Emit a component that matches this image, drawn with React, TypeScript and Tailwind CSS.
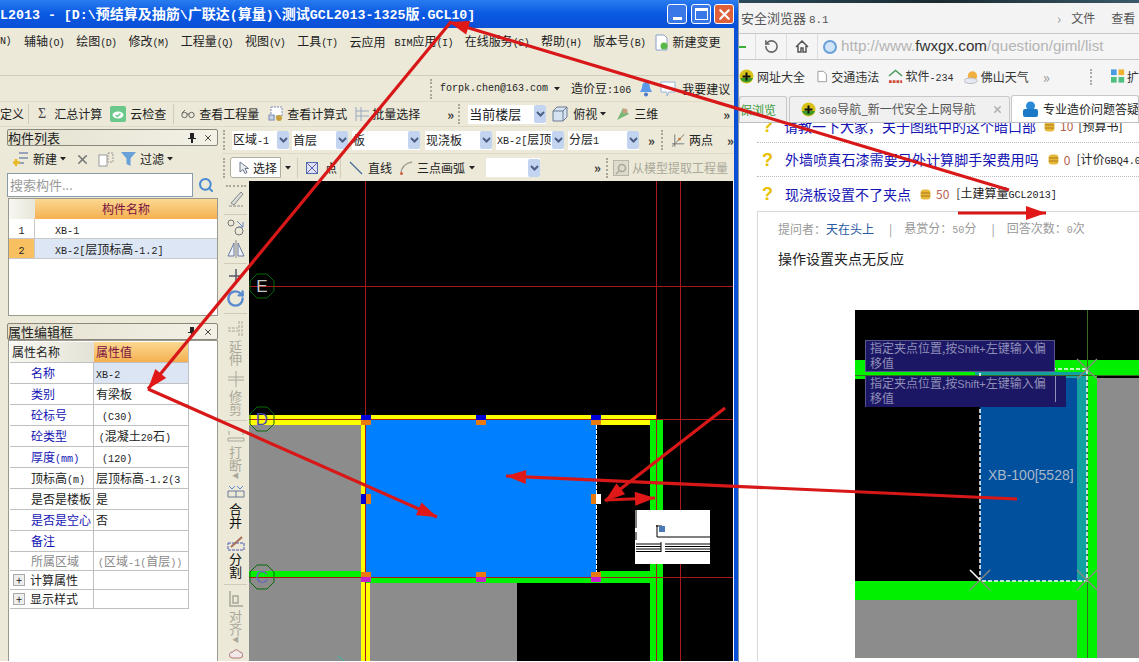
import React from 'react';
import { RotateCw, Search, X } from 'lucide-react';

type Kids = { children?: React.ReactNode; className?: string };

// ascii in the screenshot is a narrow bitmap face, so shrink it against the CJK text
const Lat = ({ children }: Kids) => (
  <span className="font-['Liberation_Mono',monospace] text-[0.84em]">{children}</span>
);

const Dd = ({ className = '' }: Kids) => (
  <span className={`w-3 h-[18px] bg-[#c3d4f0] rounded-[2px] flex items-center justify-center shrink-0 ${className}`}>
    <svg width="9" height="6"><path d="M1 1l3.5 3.5L8 1" stroke="#4a5f85" strokeWidth="2" fill="none" /></svg>
  </span>
);

const Caret = ({ className = '' }: Kids) => (
  <svg width="6" height="4" className={`shrink-0 ${className}`}><path d="M0 0h6L3 3.5z" fill="#222" /></svg>
);

const More = ({ className = '' }: Kids) => (
  <span className={`text-[13px] font-bold leading-none text-[#333] ${className}`}>»</span>
);

const Grip = ({ className = '' }: Kids) => (
  <span className={`h-5 border-l-2 border-dotted border-[#a8a698] shrink-0 ${className}`} />
);

const Sep = ({ className = '' }: Kids) => <span className={`w-px h-5 bg-[#cfccb8] shrink-0 ${className}`} />;

const Field = ({ children, className = '' }: Kids) => (
  <span className={`h-[19px] bg-white flex items-center justify-between shrink-0 ${className}`}>
    <span className="pl-[1px] whitespace-nowrap overflow-hidden">{children}</span>
    <Dd />
  </span>
);

const Key = ({ k }: { k: string }) => (
  <span className="font-['Liberation_Mono',monospace] text-[10px] tracking-[-0.6px]">({k})</span>
);

const MenuItem = ({ label, k }: { label: string; k: string }) => (
  <span className="whitespace-nowrap">
    {label}
    <Key k={k} />
  </span>
);

const PlusCoin = ({ className = '' }: Kids) => (
  <svg width="15" height="15" viewBox="0 0 15 15" className={`shrink-0 ${className}`}>
    <circle cx="7.5" cy="7.5" r="7" fill="#d8c21a" />
    <path d="M1 9a7 7 0 0 0 13 0z" fill="#3a9a2a" />
    <path d="M7.5 3.5v8M3.5 7.5h8" stroke="#111" strokeWidth="2" />
  </svg>
);

const Coin = () => (
  <svg width="11" height="11" viewBox="0 0 11 11" className="shrink-0">
    <rect x="0.5" y="0.5" width="10" height="10" rx="3.5" fill="#e8b83a" />
    <path d="M1 4h9M1 7h9" stroke="#a87a18" />
  </svg>
);

const Qmark = ({ className = '' }: Kids) => (
  <span className={`w-[15px] text-[18px] leading-none font-bold text-[#e8c000] font-['Liberation_Sans',sans-serif] shrink-0 ${className}`}>?</span>
);

function TitleBar() {
  const A = ({ children }: Kids) => (
    <span className="font-['Liberation_Mono',monospace] text-[13.3px]">{children}</span>
  );
  const btn = 'w-5 h-5 rounded-[3px] border border-white flex items-center justify-center';
  return (
    <div className="h-[28px] bg-gradient-to-b from-[#2a7cf0] via-[#0a58e2] to-[#0a50d6] flex items-center text-white font-bold text-[14px] whitespace-nowrap overflow-hidden">
      <span className="w-[664px] shrink-0">
        <A>L2013 - [D:\</A>预结算及抽筋<A>\</A>广联达<A>(</A>算量<A>)\</A>测试<A>GCL2013-1325</A>版<A>.GCL10]</A>
      </span>
      <span className={`${btn} ml-[3px] bg-[#3a78e8] items-end pb-[3px]`}><span className="w-[9px] h-[3px] bg-white" /></span>
      <span className={`${btn} ml-1 bg-[#3a78e8]`}><span className="w-[13px] h-[12px] border border-white border-t-[3px]" /></span>
      <span className={`${btn} ml-[3px] bg-[#e0603a]`}><X size={17} strokeWidth={3} /></span>
    </div>
  );
}

function TopBars() {
  return (
    <div className="bg-[#ece9d8] text-xs text-[#222] border-r-4 border-[#0a50d6]">
      <div className="h-[28px] flex items-center whitespace-nowrap">
        <span className="font-['Liberation_Mono',monospace] text-[10px] tracking-[-0.6px] w-[12px] overflow-hidden">N)</span>
        <span className="flex gap-3 ml-3 items-center">
          <MenuItem label="辅轴" k="O" />
          <MenuItem label="绘图" k="D" />
          <MenuItem label="修改" k="M" />
          <MenuItem label="工程量" k="Q" />
          <MenuItem label="视图" k="V" />
          <MenuItem label="工具" k="T" />
          <span className="-mr-[3px]">云应用</span>
          <span><Lat>BIM</Lat>应用<Key k="I" /></span>
          <MenuItem label="在线服务" k="S" />
          <MenuItem label="帮助" k="H" />
          <MenuItem label="版本号" k="B" />
        </span>
        <svg width="15" height="17" viewBox="0 0 15 17" className="ml-[8px]">
          <path d="M2 1h8l3 3v12H2z" fill="#fff" stroke="#8aa0c8" />
          <circle cx="10" cy="12" r="3.5" fill="#58b848" />
        </svg>
        <span className="ml-1">新建变更</span>
      </div>
      <div className="h-[20px] border-b border-[#cfccb8]" />
      <div className="h-[26px] flex items-center border-b border-[#dedbc8] whitespace-nowrap">
        <Grip className="ml-[430px]" />
        <span className="ml-[8px] font-['Liberation_Mono',monospace] text-[10px]">forpk.chen@163.com</span>
        <Caret className="ml-[6px]" />
        <span className="ml-[11px]">造价豆<Lat>:106</Lat></span>
        <svg width="14" height="16" viewBox="0 0 14 16" className="ml-[8px]">
          <path d="M7 1c3 0 4 3 4 6l2 4H1l2-4c0-3 1-6 4-6z" fill="#5a9ae8" />
          <circle cx="7" cy="13.5" r="2" fill="#4a7ac8" />
        </svg>
        <svg width="16" height="16" viewBox="0 0 16 16" className="ml-[7px]">
          <path d="M1 1h14v10H9l-2 4v-4H1z" fill="#fff" stroke="#9ab4d8" />
        </svg>
        <span className="ml-[6px]">我要建议</span>
      </div>
      <div className="h-[25px] flex items-center border-b border-[#dedbc8] whitespace-nowrap">
        <span className="w-[22px]">定义</span>
        <Sep className="ml-[6px]" />
        <span className="ml-[9px] text-[14px] font-['Liberation_Serif',serif] text-[#444]">Σ</span>
        <span className="ml-[8px]">汇总计算</span>
        <svg width="16" height="16" viewBox="0 0 16 16" className="ml-2">
          <rect width="16" height="16" rx="2" fill="#6ac88a" />
          <ellipse cx="8" cy="9" rx="5.5" ry="3.5" fill="#fff" />
          <path d="M5.5 9l2 1.5 3-3" stroke="#6ac88a" strokeWidth="1.5" fill="none" />
        </svg>
        <span className="ml-1">云检查</span>
        <Sep className="ml-[7px]" />
        <svg width="14" height="10" viewBox="0 0 14 10" className="ml-[7px]">
          <circle cx="3.5" cy="6" r="2.7" fill="none" stroke="#666" />
          <circle cx="10.5" cy="6" r="2.7" fill="none" stroke="#666" />
          <path d="M6 5h2M1 4l3-3" stroke="#666" />
        </svg>
        <span className="ml-1">查看工程量</span>
        <svg width="15" height="16" viewBox="0 0 15 16" className="ml-[9px]">
          <rect x="3" y="1" width="11" height="9" fill="#fff" stroke="#7a8ab0" strokeDasharray="2 1" />
          <rect x="1" y="9" width="5" height="5" fill="#c8d4e8" stroke="#7a8ab0" />
          <circle cx="11" cy="12" r="3" fill="#c8a040" />
        </svg>
        <span className="ml-1">查看计算式</span>
        <svg width="15" height="16" viewBox="0 0 15 16" className="ml-[8px]">
          <path d="M1 1v14M1 5h13M1 10h13M6 1v14" stroke="#9aa8c0" />
        </svg>
        <span className="ml-[2px]">批量选择</span>
        <More className="ml-[27px]" />
        <Grip className="ml-[4px]" />
        <Field className="w-[78px] ml-[8px] text-[13px]">当前楼层</Field>
        <svg width="16" height="16" viewBox="0 0 16 16" className="ml-[6px]">
          <path d="M1 5l4-4h10v10l-4 4H1z" fill="#d6e4f2" stroke="#6a7a90" />
          <path d="M1 5h10v10M11 5l4-4" fill="none" stroke="#6a7a90" />
        </svg>
        <span className="ml-[5px]">俯视</span>
        <Caret className="ml-[3px]" />
        <svg width="16" height="16" viewBox="0 0 16 16" className="ml-[9px]">
          <path d="M2 14L8 2l6 6z" fill="#7ab87a" />
          <circle cx="10" cy="5" r="2.5" fill="#c8a080" />
        </svg>
        <span className="ml-[3px]">三维</span>
        <More className="ml-[65px]" />
      </div>
    </div>
  );
}

function PanelHead({ title }: { title: string }) {
  return (
    <div className="h-[17px] border border-[#8a887c] rounded-[2px] bg-gradient-to-r from-[#e4e1cf] to-[#f3f1e6] flex items-center justify-between text-[13px] text-[#222] pr-1">
      <span>{title}</span>
      <span className="flex items-center gap-[7px]">
        <svg width="8" height="10" viewBox="0 0 8 10"><path d="M2 0h4v5h2v1H5v4H3V6H0V5h2z" fill="#222" /></svg>
        <X size={10} className="text-[#222]" />
      </span>
    </div>
  );
}

const props: { name: React.ReactNode; value: React.ReactNode; tone?: string; sel?: boolean }[] = [
  { name: '名称', value: <Lat>XB-2</Lat>, sel: true },
  { name: '类别', value: '有梁板' },
  { name: '砼标号', value: <Lat>&nbsp;(C30)</Lat> },
  { name: '砼类型', value: <>&nbsp;<Lat>(</Lat>混凝土<Lat>20</Lat>石<Lat>)</Lat></> },
  { name: <>厚度<Lat>(mm)</Lat></>, value: <Lat>&nbsp;(120)</Lat> },
  { name: <>顶标高<Lat>(m)</Lat></>, value: <>层顶标高<Lat>-1.2(3</Lat></>, tone: 'text-[#222]' },
  { name: '是否是楼板', value: '是', tone: 'text-[#222]' },
  { name: '是否是空心', value: '否' },
  { name: '备注', value: '' },
];

function LeftPanels() {
  return (
    <div className="w-[222px] shrink-0 bg-[#ece9d8] pl-[7px] pr-1 pt-[2px] text-xs text-[#222] h-[534px] overflow-hidden">
      <PanelHead title="构件列表" />
      <div className="h-[26px] flex items-center whitespace-nowrap">
        <svg width="17" height="17" viewBox="0 0 17 17" className="ml-[5px]">
          <path d="M7 2h9M7 7h9M7 12h5" stroke="#7a8ab0" strokeWidth="1.5" />
          <path d="M4 8v7M1 11.5h7" stroke="#e8b820" strokeWidth="2.5" />
        </svg>
        <span className="ml-1">新建</span>
        <Caret className="ml-[3px]" />
        <X size={15} strokeWidth={2.5} className="ml-[9px] text-[#777]" />
        <svg width="16" height="15" viewBox="0 0 16 15" className="ml-[8px]">
          <rect x="1" y="3" width="8" height="11" fill="#fff" stroke="#9a9a9a" />
          <rect x="10" y="1" width="5" height="9" fill="none" stroke="#9a9a9a" strokeDasharray="2 1" />
        </svg>
        <svg width="15" height="14" viewBox="0 0 15 14" className="ml-[7px]">
          <path d="M0 0h15L9.5 6.5V14l-4-2V6.5z" fill="#6aa0d8" />
        </svg>
        <span className="ml-1">过滤</span>
        <Caret className="ml-[3px]" />
      </div>
      <div className="flex items-center h-[26px]">
        <div className="w-[186px] h-[24px] bg-white border border-[#8a9aa8] flex items-center px-[2px] text-[#999] text-[13px]">搜索构件...</div>
        <Search size={16} strokeWidth={3} className="ml-[5px] text-[#4a8ad0]" />
      </div>
      <div className="h-[118px] bg-white border border-[#9a9a90] ml-[1px]">
        <div className="flex h-[20px]">
          <span className="w-[26px] bg-gradient-to-r from-[#f8f8f2] to-[#e8e6da]" />
          <span className="flex-1 bg-gradient-to-b from-[#fbd890] to-[#f4b050] text-center text-[#7a1040] leading-[20px]">构件名称</span>
        </div>
        <div className="flex h-[20px] border-b border-[#c8c8c8] leading-[20px]">
          <span className="w-[26px] text-center border-r border-[#c8c8c8]"><Lat>1</Lat></span>
          <span className="pl-5"><Lat>XB-1</Lat></span>
        </div>
        <div className="flex h-[20px] border-b border-[#c8c8c8] leading-[20px] bg-[#dce6f4] whitespace-nowrap">
          <span className="w-[26px] text-center bg-[#f8c060] border-r border-[#c8c8c8]"><Lat>2</Lat></span>
          <span className="pl-5"><Lat>XB-2[</Lat>层顶标高<Lat>-1.2]</Lat></span>
        </div>
      </div>
      <div className="mt-[7px]"><PanelHead title="属性编辑框" /></div>
      <div className="h-[322px] bg-white border border-[#9a9a90] ml-[1px] pl-[1px] pt-[1px]">
        <div className="w-[179px] border-r border-[#c0c0c0]">
          <div className="flex h-[21px] leading-[20px] border-b border-[#c0c0c0]">
            <span className="w-[84px] pl-[2px] bg-gradient-to-r from-[#f8f8f2] to-[#e4e2d6]">属性名称</span>
            <span className="flex-1 bg-gradient-to-b from-[#fbd890] to-[#f4b050] text-[#7a1040] pl-[2px]">属性值</span>
          </div>
          {props.map((p, i) => (
            <div key={i} className="flex h-[21px] leading-[20px] border-b border-[#c0c0c0] whitespace-nowrap">
              <span className={`w-[84px] pl-[21px] border-r border-[#c0c0c0] ${p.tone ?? 'text-[#1414b4]'}`}>{p.name}</span>
              <span className={`flex-1 pl-[2px] overflow-hidden ${p.sel ? 'bg-[#dbe5f4]' : ''}`}>{p.value}</span>
            </div>
          ))}
          <div className="flex h-[19px] leading-[18px] border-b border-[#c0c0c0] text-[#8a8a8a] whitespace-nowrap">
            <span className="w-[84px] pl-[21px] border-r border-[#c0c0c0]">所属区域</span>
            <span className="pl-[4px]"><Lat>(</Lat>区域<Lat>-1(</Lat>首层<Lat>))</Lat></span>
          </div>
          {['计算属性', '显示样式'].map(t => (
            <div key={t} className="flex h-[19px] leading-[18px] border-b border-[#c0c0c0]">
              <span className="w-[84px] pl-[3px] border-r border-[#c0c0c0] flex items-center gap-[5px]">
                <span className="w-[12px] h-[12px] border border-[#aaa] bg-[#eee] flex items-center justify-center text-[11px] leading-none">+</span>
                {t}
              </span>
            </div>
          ))}
        </div>
      </div>
    </div>
  );
}

function ToolRows() {
  return (
    <div className="bg-[#ece9d8] text-xs text-[#222] whitespace-nowrap">
      <div className="h-[27px] flex items-center border-b border-[#dedbc8]">
        <Grip className="ml-[1px]" />
        <Field className="w-[57px] ml-[7px]">区域<Lat>-1</Lat></Field>
        <Field className="w-[56px] ml-[3px]">首层</Field>
        <Field className="w-[68px] ml-[4px]">板</Field>
        <Field className="w-[67px] ml-[5px]">现浇板</Field>
        <Field className="w-[68px] ml-[4px]"><Lat>XB-2[</Lat>层顶</Field>
        <Field className="w-[71px] ml-[4px]">分层<Lat>1</Lat></Field>
        <More className="ml-[9px]" />
        <Grip className="ml-[6px]" />
        <svg width="15" height="15" viewBox="0 0 15 15" className="ml-[8px]">
          <path d="M1 11h13M4 14V1M1 14L14 1" stroke="#777" fill="none" />
          <circle cx="9" cy="6" r="1.5" fill="#c87a3a" />
        </svg>
        <span className="ml-[4px]">两点</span>
        <More className="ml-[14px]" />
      </div>
      <div className="h-[27px] flex items-center">
        <Grip className="ml-[1px]" />
        <span className="ml-[5px] h-[21px] w-[51px] bg-white border border-[#b0ae9e] rounded-l-[3px] flex items-center">
          <svg width="10" height="13" viewBox="0 0 10 13" className="ml-2">
            <path d="M1 1v10l3-2.5 2 4 2-1-2-4h3.5z" fill="#eee" stroke="#6a7a90" />
          </svg>
          <span className="ml-[4px]">选择</span>
        </span>
        <Caret className="ml-[4px]" />
        <Sep className="ml-[6px]" />
        <svg width="12" height="12" viewBox="0 0 12 12" className="ml-[8px]">
          <rect x="0.5" y="0.5" width="11" height="11" fill="#dfe0f2" stroke="#5a6ab0" />
          <path d="M1 1l10 10M11 1L1 11" stroke="#5a6ab0" />
        </svg>
        <span className="ml-[7px]">点</span>
        <Sep className="ml-[3px]" />
        <svg width="14" height="14" viewBox="0 0 14 14" className="ml-[8px]">
          <path d="M1 1l12 12" stroke="#4a6a9a" strokeWidth="1.3" />
        </svg>
        <span className="ml-[5px]">直线</span>
        <svg width="13" height="14" viewBox="0 0 13 14" className="ml-2">
          <path d="M1 13C1 6 6 2 12 1" stroke="#a09a90" strokeWidth="1.3" fill="none" />
          <circle cx="1.5" cy="12.5" r="1.5" fill="#d0604a" />
        </svg>
        <span className="ml-1">三点画弧</span>
        <Caret className="ml-[4px]" />
        <Field className="w-[54px] ml-[11px]" />
        <More className="ml-[54px]" />
        <Grip className="ml-[5px]" />
        <svg width="16" height="16" viewBox="0 0 16 16" className="ml-[5px]">
          <rect x="0.5" y="0.5" width="15" height="15" fill="#dedbcc" stroke="#b8b6a8" />
          <circle cx="9" cy="8" r="3.5" fill="none" stroke="#a8a698" strokeWidth="1.5" />
          <path d="M6 11l-3 3" stroke="#a8a698" strokeWidth="1.5" />
        </svg>
        <span className="ml-[3px] text-[#aaa89a]">从模型提取工程量</span>
      </div>
    </div>
  );
}

// icon + vertical label column between the panels and the drawing area
const StripText = ({ text, dim, more, className = '' }: { text: string; dim?: boolean; more?: boolean; className?: string }) => (
  <div className={`flex flex-col items-center text-[13px] leading-[13px] ${dim ? 'text-[#aaa89a]' : 'text-[#111]'} ${className}`}>
    {text.split('').map(c => <span key={c}>{c}</span>)}
    {more && <span className="text-[7px] leading-[8px]">◀</span>}
  </div>
);

const StripSep = ({ className = '' }: Kids) => <div className={`w-[23px] h-px bg-[#cfccb8] shrink-0 ${className}`} />;

function ToolStrip() {
  const g = '#a8a698';
  return (
    <div className="w-[27px] h-[480px] shrink-0 bg-[#ece9d8] flex flex-col items-center overflow-hidden">
      <div className="w-5 border-t-2 border-dotted border-[#a8a698] mt-[4px]" />
      <svg width="18" height="18" viewBox="0 0 18 18" className="mt-[3px] shrink-0">
        <path d="M2 16h14" stroke="#888" strokeDasharray="3 1" />
        <path d="M4 13l10-11 2 2-9 11z" fill="#d8dcd8" stroke="#888" />
      </svg>
      <StripSep className="mt-[6px]" />
      <svg width="18" height="18" viewBox="0 0 18 18" className="mt-[3px] shrink-0">
        <circle cx="4" cy="5" r="3" fill="none" stroke="#777" />
        <circle cx="12" cy="13" r="4" fill="none" stroke="#777" />
        <path d="M10 3l6 6M16 4v5h-5" fill="none" stroke="#6a8ac0" />
      </svg>
      <svg width="18" height="18" viewBox="0 0 18 18" className="mt-[4px] shrink-0">
        <path d="M9 0v18" stroke="#888" />
        <path d="M7 3v13H1zM11 3v13h6z" fill="#eef2fa" stroke="#6a7aa0" />
      </svg>
      <StripSep className="mt-[5px]" />
      <svg width="18" height="16" viewBox="0 0 18 16" className="mt-[4px] shrink-0">
        <path d="M9 1v14M2 8h14" stroke="#556" strokeWidth="1.5" />
      </svg>
      <RotateCw size={19} strokeWidth={3} className="mt-[5px] text-[#5a8ad0] shrink-0" />
      <StripSep className="mt-[5px]" />
      <svg width="18" height="18" viewBox="0 0 18 18" className="mt-[6px] shrink-0">
        <path d="M15 1v16M12 1v16M1 8h10M1 11h10" stroke={g} strokeDasharray="3 1" />
      </svg>
      <StripText text="延伸" dim className="mt-[1px]" />
      <svg width="18" height="18" viewBox="0 0 18 18" className="mt-[5px] shrink-0">
        <path d="M9 1v16M1 7h16M1 10h16" stroke={g} />
      </svg>
      <StripText text="修剪" dim className="mt-[1px]" />
      <StripSep className="mt-[5px]" />
      <svg width="18" height="14" viewBox="0 0 18 14" className="mt-[8px] shrink-0">
        <path d="M2 2v4M16 2v4M1 9h16v3H1z" fill="none" stroke={g} />
      </svg>
      <StripText text="打断" dim more className="mt-[2px]" />
      <svg width="18" height="14" viewBox="0 0 18 14" className="mt-[6px] shrink-0">
        <path d="M1 6h16M1 12h16M1 6v6M17 6v6M9 6v6" stroke="#6a7a9a" fill="none" />
        <path d="M2 1l3 3 3-3M10 1l3 3 3-3" stroke="#5a8ad0" fill="none" />
      </svg>
      <StripText text="合并" className="mt-[3px]" />
      <svg width="18" height="16" viewBox="0 0 18 16" className="mt-[8px] shrink-0">
        <rect x="1" y="7" width="16" height="7" fill="none" stroke="#4a5ab0" strokeDasharray="3 1" />
        <path d="M4 11L15 1" stroke="#a8705a" strokeWidth="2" />
      </svg>
      <StripText text="分割" />
      <StripSep className="mt-[6px]" />
      <svg width="16" height="16" viewBox="0 0 16 16" className="mt-[6px] shrink-0">
        <path d="M2 0v15h13M5 5h5v7H5z" fill="none" stroke={g} strokeWidth="1.5" />
      </svg>
      <StripText text="对齐" dim more className="mt-[2px]" />
      <svg width="14" height="14" viewBox="0 0 14 14" className="mt-[5px] shrink-0">
        <path d="M3 10a3 3 0 0 1 1-6 3.5 3.5 0 0 1 6.5 0A3 3 0 0 1 11 10z" fill="#f2e8e8" stroke="#b07a7a" />
      </svg>
    </div>
  );
}

const Grips = ({ x, y, kind }: { x: number; y: number; kind: string }) => {
  // 10px square grip markers along the slab's outline
  const size = 10;
  const cols: Record<string, string[]> = {
    top: ['#0000d8', '#e87a10'],
    side: ['#0000d8', '#e87a10'],
    right: ['#e87a10', '#ffffff'],
    bottom: ['#e87a10', '#c820c8'],
  };
  const [a, b] = cols[kind];
  if (kind === 'side' || kind === 'right') {
    return (
      <g>
        <rect x={x - 5} y={y - 5} width={5} height={size} fill={a} />
        <rect x={x} y={y - 5} width={5} height={size} fill={b} />
      </g>
    );
  }
  return (
    <g>
      <rect x={x - 5} y={y - 5} width={size} height={5} fill={a} />
      <rect x={x - 5} y={y} width={size} height={5} fill={b} />
    </g>
  );
};

function Axis({ x, y, label, color }: { x: number; y: number; label: string; color: string }) {
  const pts = Array.from({ length: 8 }, (_, i) => {
    const a = (Math.PI * 2 * i) / 8 + Math.PI / 8;
    return `${x + 13 * Math.cos(a)},${y + 13 * Math.sin(a)}`;
  }).join(' ');
  return (
    <g>
      <polygon points={pts} fill="none" stroke="#086808" />
      <text x={x} y={y + 6} textAnchor="middle" fontSize="17" fontFamily="Liberation Sans, sans-serif" fill={color}>{label}</text>
    </g>
  );
}

function Canvas() {
  return (
    <svg width="484" height="480" viewBox="249 182 484 480" className="block shrink-0 bg-black">
      <rect x="249" y="426" width="112" height="146" fill="#8c8c8c" />
      <rect x="249" y="578" width="112" height="84" fill="#8c8c8c" />
      <rect x="370" y="584" width="147" height="78" fill="#8c8c8c" />
      <rect x="366" y="421" width="230" height="158" fill="#0080ff" />
      <rect x="249" y="416" width="407" height="5" fill="#ffff00" />
      <rect x="249" y="421" width="117" height="5" fill="#ffff00" />
      <rect x="600" y="421" width="50" height="5" fill="#ffff00" />
      <rect x="361" y="421" width="5" height="241" fill="#ffff00" />
      <rect x="366" y="584" width="4" height="78" fill="#ffff00" />
      <rect x="249" y="572" width="112" height="6" fill="#00f000" />
      <rect x="366" y="578" width="284" height="6" fill="#00f000" />
      <rect x="600" y="572" width="50" height="6" fill="#00f000" />
      <rect x="650" y="421" width="13" height="241" fill="#00f000" />
      <g stroke="#a81818" strokeWidth="1">
        <path d="M365.5 182v480M656.5 182v480M680.5 182v480" />
        <path d="M249 287.5h484M249 420.5h484M249 578.5h484" />
      </g>
      <path d="M596.5 421v157" stroke="#fff" strokeDasharray="4 1" />
      <Grips x={366} y={421} kind="top" />
      <Grips x={481} y={421} kind="top" />
      <Grips x={596} y={421} kind="top" />
      <Grips x={366} y={500} kind="side" />
      <Grips x={596} y={500} kind="right" />
      <Grips x={366} y={578} kind="bottom" />
      <Grips x={481} y={578} kind="bottom" />
      <Grips x={596} y={578} kind="bottom" />
      <Axis x={262} y={287} label="E" color="#c8c8c8" />
      <Axis x={262} y={420} label="D" color="#4a4ab0" />
      <Axis x={262} y={578} label="C" color="#6a6ab8" />
      <path d="M338 657l6 5" stroke="#30c0a0" />
      <rect x="635" y="511" width="75" height="54" fill="#fff" />
      <path d="M636 511v18M636 533v8M656 527h6M657 538h53M657 538v-12M661 543v10M636 545h25M636 547.5h25M636 550h25M636 552.5h25M665 545h45M665 547.5h45M665 550h45M665 552.5h45" stroke="#000" fill="none" />
      <rect x="659" y="527" width="6" height="6" fill="#4a7ab8" />
    </svg>
  );
}

function Browser() {
  return (
    <div className="w-[401px] shrink-0 h-[662px] overflow-hidden bg-white font-['Noto_Sans_CJK_SC',sans-serif] border-l border-[#8a9aa8] text-xs text-[#333]">
      <div className="h-[3px] bg-gradient-to-r from-[#2a4a5a] via-[#1a2a30] to-[#3a5a6a]" />
      <div className="h-[30px] bg-[#f3f3f3] flex items-center whitespace-nowrap text-[#555]">
        <span className="ml-[2px] text-[13px] w-[310px]">安全浏览器 <Lat>8.1</Lat></span>
        <span className="text-[#999] text-[14px] ml-[6px]">›</span>
        <span className="ml-[10px]">文件</span>
        <span className="ml-[16px]">查看</span>
      </div>
      <div className="h-[27px] bg-[#f5f5f5] border-y border-[#c8c8c8] flex items-center whitespace-nowrap">
        <span className="w-[7px] h-[2px] bg-[#3ab03a]" />
        <span className="w-px h-full bg-[#ddd] ml-[9px]" />
        <RotateCw size={15} strokeWidth={2.5} className="ml-[8px] text-[#666] -scale-x-100" />
        <span className="w-px h-full bg-[#ddd] ml-[7px]" />
        <svg width="14" height="13" viewBox="0 0 14 13" className="ml-[8px]">
          <path d="M1 7l6-6 6 6M3 6v6h3V8h2v4h3V6" fill="none" stroke="#555" strokeWidth="1.5" />
        </svg>
        <span className="w-px h-full bg-[#ddd] ml-[8px]" />
        <span className="w-[14px] h-[14px] rounded-full bg-[#cfe4f8] border-2 border-[#6aa0d8] ml-[5px]" />
        <span className="ml-[4px] text-[15.2px] font-['Liberation_Sans',sans-serif] text-[#b4b4b4]">
          http://www.<span className="text-[#333]">fwxgx.com</span>/question/giml/list
        </span>
      </div>
      <div className="h-[36px] bg-[#f5f5f5] flex items-center whitespace-nowrap pb-[3px]">
        <PlusCoin className="ml-0" />
        <span className="ml-[3px]">网址大全</span>
        <svg width="11" height="13" viewBox="0 0 11 13" className="ml-[12px]">
          <path d="M1 1h6l3 3v8H1z" fill="#fff" stroke="#999" />
        </svg>
        <span className="ml-[4px]">交通违法</span>
        <svg width="16" height="15" viewBox="0 0 16 15" className="ml-[9px]">
          <path d="M1 7l7-6 7 6" fill="none" stroke="#4a9a5a" strokeWidth="1.5" />
          <path d="M1 13h14" stroke="#d04a3a" strokeWidth="3" strokeDasharray="3 1" />
        </svg>
        <span className="ml-[2px]">软件<Lat>-234</Lat></span>
        <svg width="16" height="14" viewBox="0 0 16 14" className="ml-[10px]">
          <circle cx="9" cy="6" r="5" fill="#f0b040" />
          <ellipse cx="7" cy="11" rx="7" ry="3" fill="#e4e8f0" stroke="#bbb" />
        </svg>
        <span className="ml-[2px]">佛山天气</span>
        <span className="ml-[14px] text-[#999] text-[15px]">»</span>
        <span className="ml-[40px] h-4 border-l-2 border-dotted border-[#aaa]" />
        <svg width="15" height="15" viewBox="0 0 15 15" className="ml-[19px]">
          <rect width="6" height="6" fill="#4a9ae0" />
          <rect x="8" width="6" height="6" fill="#f0b030" />
          <rect y="8" width="6" height="6" fill="#50c080" />
          <rect x="8" y="8" width="6" height="6" fill="#50c080" />
        </svg>
        <span className="ml-[2px]">扩</span>
      </div>
      <div className="h-[27px] bg-[#f0f0f0] border-b border-[#c0c0c0] flex items-end whitespace-nowrap">
        <span className="w-[48px] h-[26px] border border-b-0 border-[#c8c8c8] rounded-t-[3px] overflow-hidden text-[#3a9a3a] leading-[26px] shrink-0">保浏览</span>
        <span className="w-[221px] h-[26px] ml-[2px] border border-b-0 border-[#c8c8c8] rounded-t-[3px] flex items-center shrink-0 text-[#555]">
          <PlusCoin className="ml-[11px]" />
          <span className="ml-[3px]"><Lat>360</Lat>导航_新一代安全上网导航</span>
          <X size={11} strokeWidth={3} className="ml-[16px] text-[#aaa]" />
        </span>
        <span className="h-[27px] flex-1 ml-[1px] bg-white border border-b-0 border-[#c8c8c8] rounded-t-[3px] flex items-center overflow-hidden text-[#222]">
          <svg width="15" height="16" viewBox="0 0 15 16" className="ml-[11px] shrink-0">
            <circle cx="7.5" cy="5" r="4.5" fill="#2a8ad8" />
            <rect y="8" width="15" height="8" rx="2" fill="#1a7ac8" />
          </svg>
          <span className="ml-[5px]">专业造价问题答疑</span>
        </span>
      </div>
      <div className="h-[538px] overflow-hidden pl-[18px] text-[14px]">
        <div className="-mt-[13px] h-[33px] flex items-center whitespace-nowrap border-b border-dotted border-[#bbb]">
          <Qmark className="ml-[5px]" />
          <span className="ml-[7px] text-[#1414b4]">请教一下大家，关于图纸中的这个暗口部</span>
          <span className="ml-[8px]"><Coin /></span>
          <span className="ml-[5px] text-[#b8604a] text-xs">10</span>
          <span className="ml-[5px] text-xs text-[#222]">[预算书]</span>
        </div>
        <div className="h-[34px] flex items-center whitespace-nowrap border-b border-dotted border-[#bbb]">
          <Qmark className="ml-[5px]" />
          <span className="ml-[8px] text-[#1414b4] tracking-[0.1px]">外墙喷真石漆需要另外计算脚手架费用吗</span>
          <span className="ml-[9px]"><Coin /></span>
          <span className="ml-[5px] text-[#b8604a] text-xs">0</span>
          <span className="ml-[6px] text-xs text-[#222]">[计价<Lat>GBQ4.0</Lat></span>
        </div>
        <div className="h-[34px] flex items-center whitespace-nowrap">
          <Qmark className="ml-[5px]" />
          <span className="ml-[8px] text-[#1414b4]">现浇板设置不了夹点</span>
          <span className="ml-[9px]"><Coin /></span>
          <span className="ml-[5px] text-[#b8604a] text-xs">50</span>
          <span className="ml-[7px] text-xs text-[#222]">[土建算量<Lat>GCL2013]</Lat></span>
        </div>
        <div className="border-t border-l border-[#d8d8d8] h-[480px] pl-[20px] pt-[8px]">
          <div className="h-[18px] flex items-center text-xs text-[#999] whitespace-nowrap">
            <span>提问者：</span><span className="text-[#2a5aa0]">天在头上</span>
            <span className="ml-[15px]">|</span>
            <span className="ml-[12px]">悬赏分：<Lat>50</Lat>分</span>
            <span className="ml-[15px]">|</span>
            <span className="ml-[12px]">回答次数：<Lat>0</Lat>次</span>
          </div>
          <div className="mt-[9px] h-[22px] leading-[22px] text-[14px] text-[#222]">操作设置夹点无反应</div>
          <EmbeddedShot />
        </div>
      </div>
    </div>
  );
}

function EmbeddedShot() {
  const cross = (x: number, y: number) => `M${x - 10} ${y - 10}L${x + 10} ${y + 10}M${x + 10} ${y - 10}L${x - 10} ${y + 10}`;
  return (
    <div className="relative ml-[77px] mt-[41px] w-[284px] h-[348px]">
      <svg width="284" height="348" viewBox="855 310 284 348" className="block bg-black">
        <rect x="855" y="360" width="284" height="15" fill="#00f000" />
        <rect x="855" y="375" width="125" height="4" fill="#00f000" />
        <rect x="1097" y="378" width="42" height="280" fill="#8c8c8c" />
        <rect x="980" y="375" width="97" height="206" fill="#00509e" />
        <rect x="1077" y="372" width="10" height="209" fill="#12a0a0" />
        <rect x="975" y="372" width="112" height="6" fill="#12a0a0" />
        <rect x="1087" y="375" width="10" height="283" fill="#00f000" />
        <rect x="855" y="581" width="242" height="19" fill="#00f000" />
        <rect x="855" y="600" width="222" height="58" fill="#8c8c8c" />
        <rect x="1077" y="600" width="10" height="58" fill="#00f000" />
        <path d="M1087.5 310v348M855 375.5h284" stroke="#3a6a20" />
        <rect x="980" y="369" width="107" height="212" fill="none" stroke="#fff" strokeWidth="1.5" strokeDasharray="4 2" />
        <path d={cross(1087, 369)} stroke="#8a8a80" strokeWidth="1.3" />
        <path d={cross(980, 580)} stroke="#8a8a80" strokeWidth="1.3" />
        <path d="M970 570l10 10" stroke="#fff" strokeWidth="1.3" />
        <path d={cross(1087, 580)} stroke="#8a8a80" strokeWidth="1.3" />
        <text x="988" y="480" fontSize="14" fontFamily="Liberation Sans, sans-serif" fill="#a8b8c8">XB-100[5528]</text>
      </svg>
      <div className="absolute left-[10px] top-[30px] w-[190px] h-[32px] bg-[#1c1764] border border-[#55558a] px-[4px] text-xs leading-[13px] text-[#8f8fb8]">
        指定夹点位置,按<span className="font-['Liberation_Sans',sans-serif] text-[11px]">Shift+</span>左键输入偏移值
      </div>
      <div className="absolute left-[10px] top-[66px] w-[201px] h-[31px] bg-[#1c1764] border-l border-[#55558a] pl-[4px] text-xs leading-[13px] text-[#8f8fb8]">
        <div className="w-[182px]">指定夹点位置,按<span className="font-['Liberation_Sans',sans-serif] text-[11px]">Shift+</span>左键输入偏移值</div>
        <span className="absolute left-[189px] top-0 h-[26px] w-px bg-[#8f8fb8]" />
      </div>
    </div>
  );
}

function Arrow({ x1, y1, x2, y2, both }: { x1: number; y1: number; x2: number; y2: number; both?: boolean }) {
  const head = (tx: number, ty: number, fx: number, fy: number, key: string) => {
    const a = Math.atan2(ty - fy, tx - fx);
    const len = 20;
    const w = 7;
    const bx = tx - len * Math.cos(a);
    const by = ty - len * Math.sin(a);
    const px = w * Math.sin(a);
    const py = w * Math.cos(a);
    return <polygon key={key} points={`${tx},${ty} ${bx + px},${by - py} ${bx - px},${by + py}`} fill="#e01818" />;
  };
  return (
    <g>
      <line x1={x1} y1={y1} x2={x2} y2={y2} stroke="#d81818" strokeWidth="3.2" />
      {head(x2, y2, x1, y1, 'b')}
      {both && head(x1, y1, x2, y2, 'a')}
    </g>
  );
}

export default function App() {
  return (
    <div className="relative w-[1139px] h-[662px] overflow-hidden flex bg-white font-['Noto_Sans_CJK_SC',sans-serif]">
      <div className="w-[738px] shrink-0 h-[662px] overflow-hidden">
        <TitleBar />
        <TopBars />
        <div className="flex border-r-4 border-[#0a50d6]">
          <LeftPanels />
          <div className="flex-1 min-w-0">
            <ToolRows />
            <div className="flex">
              <ToolStrip />
              <Canvas />
            </div>
          </div>
        </div>
      </div>
      <Browser />
      {/* hand-drawn red markup over the whole screenshot */}
      <svg width="1139" height="662" className="absolute inset-0 pointer-events-none">
        <Arrow x1={450} y1={23} x2={148} y2={389} />
        <Arrow x1={148} y1={389} x2={437} y2={517} />
        <Arrow x1={1009} y1={190} x2={449} y2={22} />
        <Arrow x1={958} y1={213} x2={1046} y2={213} />
        <Arrow x1={1017} y1={499} x2={506} y2={476} />
        <Arrow x1={725} y1={408} x2={605} y2={501} />
        <Arrow x1={606} y1={500} x2={655} y2={498} />
      </svg>
    </div>
  );
}
